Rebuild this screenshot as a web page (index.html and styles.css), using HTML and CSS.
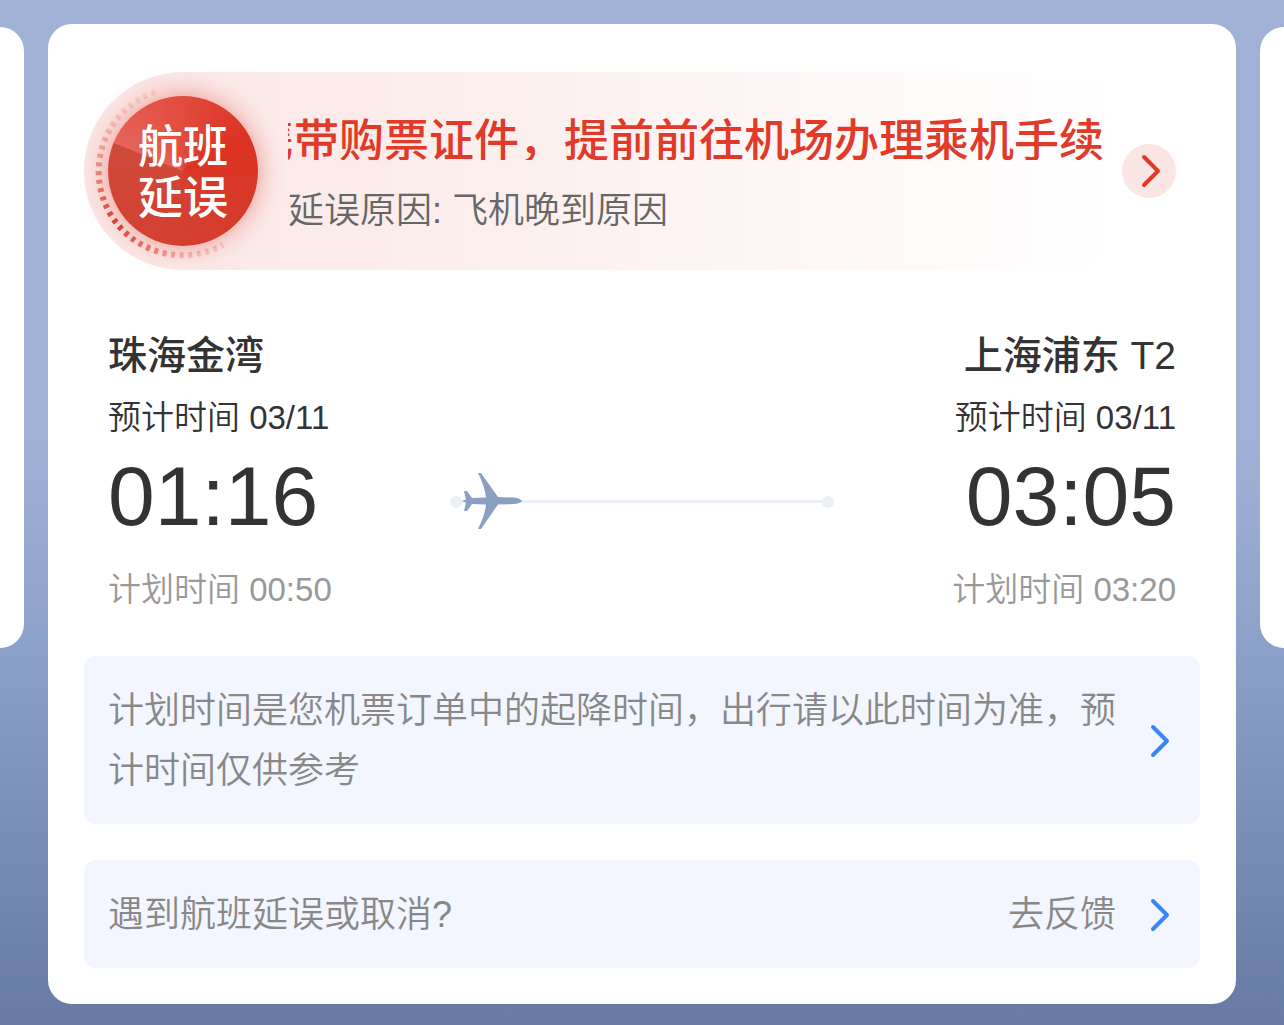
FILE: index.html
```html
<!DOCTYPE html>
<html lang="zh-CN">
<head>
  <meta charset="UTF-8" />
  <meta name="viewport" content="width=device-width, initial-scale=1.0"/>
  <title>航班动态</title>
  <link rel="stylesheet" href="styles.css">
</head>
<body>
  <main class="slider">
    <div class="side side-left"></div>

    <section class="card">
      <div class="banner">
        <div class="badge">
          <svg class="ring" viewBox="0 0 198 198" aria-hidden="true">
            <defs>
              <linearGradient id="fade" gradientUnits="userSpaceOnUse" x1="60" y1="15" x2="125" y2="185">
                <stop offset="0" stop-color="#e03a2a" stop-opacity="0.05"/>
                <stop offset="0.4" stop-color="#e03a2a" stop-opacity="0.6"/>
                <stop offset="0.65" stop-color="#e03a2a" stop-opacity="1"/>
                <stop offset="0.85" stop-color="#e03a2a" stop-opacity="0.6"/>
                <stop offset="1" stop-color="#e03a2a" stop-opacity="0.1"/>
              </linearGradient>
            </defs>
            <path d="M71 20 A84 84 0 1 0 139 173" fill="none" stroke="url(#fade)" stroke-width="6" stroke-dasharray="4 4.6"/>
          </svg>
          <strong class="badge-text">航班<br>延误</strong>
        </div>
        <div class="notice">
          <div class="marquee"><span>请携带购票证件，提前前往机场办理乘机手续</span></div>
          <p class="reason">延误原因: 飞机晚到原因</p>
        </div>
        <button class="more" type="button" aria-label="查看详情">
          <svg class="arrow" viewBox="0 0 20 34"><path d="M3 3 L17 17 L3 31"/></svg>
        </button>
      </div>

      <div class="flight">
        <div class="place">
          <h2 class="city">珠海金湾</h2>
          <p class="expect">预计时间 03/11</p>
          <p class="time">01:16</p>
          <p class="plan">计划时间 00:50</p>
        </div>
        <svg class="route" viewBox="0 0 384 60" aria-hidden="true">
          <path d="M6 31.5H378" stroke="#edeff6" stroke-width="3"/>
          <circle cx="6" cy="32" r="6" fill="#edeff6"/>
          <circle cx="378" cy="32" r="6" fill="#edeff6"/>
          <path d="M12 31 L16 29.5 L14 21 H17 L22 28 L36 27.5 Q35 17 28 3 H31 L48 27 L64 27.5 Q70 28 72 31 Q70 33.5 64 34 L48 34.5 L31 59 H28 Q35 45 36 34.5 L22 34 L17 41 H14 L16 32.5 Z" fill="#8b9fc3"/>
        </svg>
        <div class="place place-end">
          <h2 class="city">上海浦东 T2</h2>
          <p class="expect">预计时间 03/11</p>
          <p class="time">03:05</p>
          <p class="plan">计划时间 03:20</p>
        </div>
      </div>

      <a class="tip" href="#">
        <span class="tip-text">计划时间是您机票订单中的起降时间，出行请以此时间为准，预计时间仅供参考</span>
        <svg class="arrow" viewBox="0 0 20 34"><path d="M3 3 L17 17 L3 31"/></svg>
      </a>

      <a class="tip" href="#">
        <span class="tip-text">遇到航班延误或取消?</span>
        <span>去反馈</span>
        <svg class="arrow" viewBox="0 0 20 34"><path d="M3 3 L17 17 L3 31"/></svg>
      </a>
    </section>

    <div class="side side-right"></div>
  </main>
</body>
</html>
```
FILE: styles.css
```css
* {
  box-sizing: border-box;
}
body {
  margin: 0;
  min-height: 100vh;
  font-family: "Liberation Sans", "Noto Sans CJK SC", sans-serif;
  font-size: 36px;
  font-weight: 350;
  color: #333;
  background: linear-gradient(#a0b1d6 0%, #a0b1d6 43%, #8ba0c9 64%, #667aa4 100%);
}
h2, p {
  margin: 0;
}
.slider {
  display: flex;
  align-items: flex-start;
  gap: 24px;
  padding: 24px 0 21px;
}
.side {
  flex: 0 0 24px;
  height: 621px;
  margin-top: 3px;
  background: white;
}
.side-left {
  border-radius: 0 24px 24px 0;
}
.side-right {
  border-radius: 24px 0 0 24px;
}
.card {
  flex: 1;
  min-width: 0;
  padding: 48px 36px 36px;
  background: white;
  border-radius: 24px;
}

/* delay banner */
.banner {
  display: flex;
  align-items: center;
  padding-right: 24px;
  border-radius: 99px;
  background: linear-gradient(90deg, #fae6e4, #fcf0ef 40%, #fffdfd 85%, #fff 100%);
}
.badge {
  position: relative;
  flex: none;
  padding: 24px;
}
.ring {
  position: absolute;
  top: 0;
  left: 0;
  width: 198px;
  height: 198px;
}
.badge-text {
  display: flex;
  align-items: center;
  justify-content: center;
  width: 150px;
  height: 150px;
  padding-top: 3px;
  border-radius: 50%;
  font-size: 45px;
  font-weight: 500;
  line-height: 51px;
  color: white;
  background: conic-gradient(from 292deg, #e6645a, #e24a3c 70deg, #dc3222 130deg, #d63c2c 210deg, #cf4a3b 360deg);
  box-shadow: 0 0 24px rgba(226, 60, 44, 0.5);
}
.notice {
  flex: 1;
  min-width: 0;
  padding: 6px 18px 0 6px;
}
.marquee {
  display: flex;
  justify-content: flex-end;
  height: 50px;
  overflow: hidden;
  font-size: 45px;
  font-weight: 500;
  line-height: 64px;
  color: #e13a29;
  white-space: nowrap;
}
.reason {
  margin-top: 24px;
  line-height: 54px;
  color: #666;
}
.more {
  display: flex;
  flex: none;
  align-items: center;
  justify-content: center;
  width: 54px;
  height: 54px;
  padding: 0 0 0 4px;
  border: none;
  border-radius: 50%;
  color: #e13a29;
  background: #fae6e5;
  cursor: pointer;
}
.arrow {
  flex: none;
  width: 20px;
  height: 34px;
  fill: none;
  stroke: currentColor;
  stroke-width: 4;
  stroke-linecap: round;
  stroke-linejoin: round;
}

/* departure and arrival */
.flight {
  display: flex;
  justify-content: space-between;
  padding: 56px 24px 36px;
}
.place-end {
  text-align: right;
}
.city {
  font-size: 39px;
  font-weight: 500;
  line-height: 60px;
}
.expect {
  font-size: 33px;
  line-height: 64px;
}
.time {
  font-size: 84px;
  line-height: 92px;
}
.plan {
  margin-top: 18px;
  font-size: 33px;
  line-height: 60px;
  color: #999;
}
.route {
  width: 384px;
  height: 60px;
  margin-top: 144px;
}

/* grey-blue rows */
.tip {
  display: flex;
  align-items: center;
  padding: 25px 30px 23px 24px;
  border-radius: 12px;
  line-height: 60px;
  color: #888;
  background: #f3f6fe;
  text-decoration: none;
}
.tip + .tip {
  margin-top: 36px;
}
.tip-text {
  flex: 1;
}
.tip .arrow {
  margin-left: 34px;
  color: #3a86f2;
}
```
